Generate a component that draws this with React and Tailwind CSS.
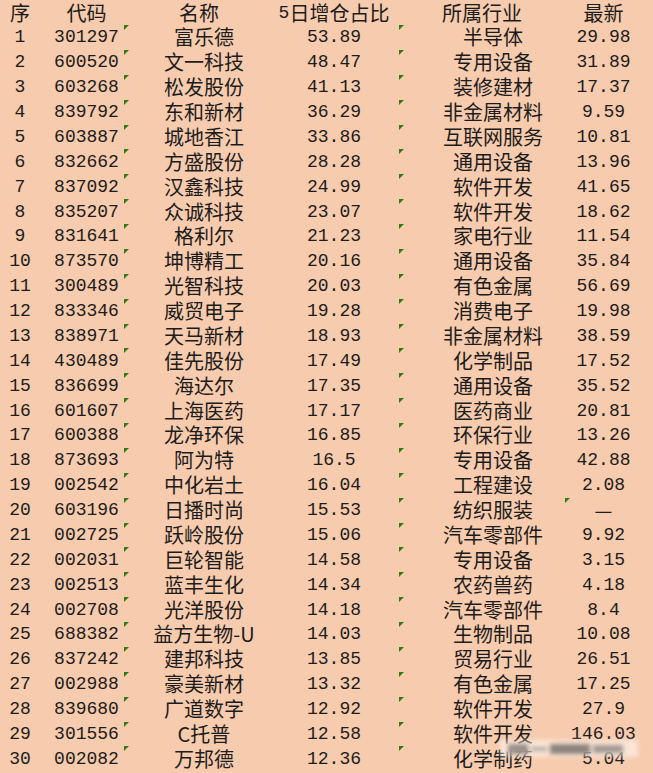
import React from 'react';

const rows = [
  ['1', '301297', '富乐德', '53.89', '半导体', '29.98'],
  ['2', '600520', '文一科技', '48.47', '专用设备', '31.89'],
  ['3', '603268', '松发股份', '41.13', '装修建材', '17.37'],
  ['4', '839792', '东和新材', '36.29', '非金属材料', '9.59'],
  ['5', '603887', '城地香江', '33.86', '互联网服务', '10.81'],
  ['6', '832662', '方盛股份', '28.28', '通用设备', '13.96'],
  ['7', '837092', '汉鑫科技', '24.99', '软件开发', '41.65'],
  ['8', '835207', '众诚科技', '23.07', '软件开发', '18.62'],
  ['9', '831641', '格利尔', '21.23', '家电行业', '11.54'],
  ['10', '873570', '坤博精工', '20.16', '通用设备', '35.84'],
  ['11', '300489', '光智科技', '20.03', '有色金属', '56.69'],
  ['12', '833346', '威贸电子', '19.28', '消费电子', '19.98'],
  ['13', '838971', '天马新材', '18.93', '非金属材料', '38.59'],
  ['14', '430489', '佳先股份', '17.49', '化学制品', '17.52'],
  ['15', '836699', '海达尔', '17.35', '通用设备', '35.52'],
  ['16', '601607', '上海医药', '17.17', '医药商业', '20.81'],
  ['17', '600388', '龙净环保', '16.85', '环保行业', '13.26'],
  ['18', '873693', '阿为特', '16.5', '专用设备', '42.88'],
  ['19', '002542', '中化岩土', '16.04', '工程建设', '2.08'],
  ['20', '603196', '日播时尚', '15.53', '纺织服装', '—'],
  ['21', '002725', '跃岭股份', '15.06', '汽车零部件', '9.92'],
  ['22', '002031', '巨轮智能', '14.58', '专用设备', '3.15'],
  ['23', '002513', '蓝丰生化', '14.34', '农药兽药', '4.18'],
  ['24', '002708', '光洋股份', '14.18', '汽车零部件', '8.4'],
  ['25', '688382', '益方生物-U', '14.03', '生物制品', '10.08'],
  ['26', '837242', '建邦科技', '13.85', '贸易行业', '26.51'],
  ['27', '002988', '豪美新材', '13.32', '有色金属', '17.25'],
  ['28', '839680', '广道数字', '12.92', '软件开发', '27.9'],
  ['29', '301556', 'C托普', '12.58', '软件开发', '146.03'],
  ['30', '002082', '万邦德', '12.36', '化学制药', '5.04'],
];

const mono = "font-['Liberation_Mono','Noto_Sans_CJK_SC',monospace] text-[18px]";
const cjk = "font-['Noto_Sans_CJK_SC',sans-serif] text-[20px]";

// little green error mark excel puts in the corner
function Flag() {
  return (
    <span className="absolute left-0 top-0 w-0 h-0 border-t-[5px] border-r-[5px] border-t-[#2f7d12] border-r-transparent" />
  );
}

function Cell({ children, className = '', flag = false }) {
  return (
    <div className={`relative flex items-center justify-center leading-[22px] whitespace-nowrap ${className}`}>
      {flag && <Flag />}
      {children}
    </div>
  );
}

export default function App() {
  return (
    <div className="relative w-[653px] h-[773px] bg-[#f7cbad] text-[#1c1c1c] overflow-hidden">
      <div className="grid grid-cols-[40px_84px_160px_115px_166px_88px] grid-rows-[25px] auto-rows-[24.88px]">
        <Cell className={cjk}>序</Cell>
        <Cell className={`${cjk} pl-[9px]`}>代码</Cell>
        <Cell className={`${cjk} pr-[10px]`}>名称</Cell>
        <Cell className={`${cjk} pr-[15px]`}>
          <span className={mono}>5</span>日增仓占比
        </Cell>
        <Cell className={cjk}>所属行业</Cell>
        <Cell className={`${cjk} pr-[11px]`}>最新</Cell>

        {rows.map((r) => (
          <React.Fragment key={r[0]}>
            <Cell className={mono}>{r[0]}</Cell>
            <Cell className={`${mono} pl-[9px]`}>{r[1]}</Cell>
            <Cell className={cjk} flag>{r[2]}</Cell>
            <Cell className={`${mono} pr-[15px]`}>{r[3]}</Cell>
            <Cell className={`${cjk} pl-[22px]`} flag>{r[4]}</Cell>
            <Cell className={`${r[5] === '—' ? cjk : mono} pr-[11px]`} flag={r[0] === '20'}>{r[5]}</Cell>
          </React.Fragment>
        ))}
      </div>

      {/* watermark */}
      <div className="absolute left-[500px] top-[740px] w-[138px] h-[17px] bg-white/50 blur-[2px] flex items-center gap-[3px] px-2">
        <span className="h-[10px] w-[20px] bg-[#9a8f8a]" />
        <span className="h-[4px] w-[16px] bg-[#b5aaa4]" />
        <span className="h-[10px] w-[40px] bg-[#8d837e]" />
        <span className="h-[8px] w-[30px] bg-[#a39892]" />
      </div>
    </div>
  );
}
